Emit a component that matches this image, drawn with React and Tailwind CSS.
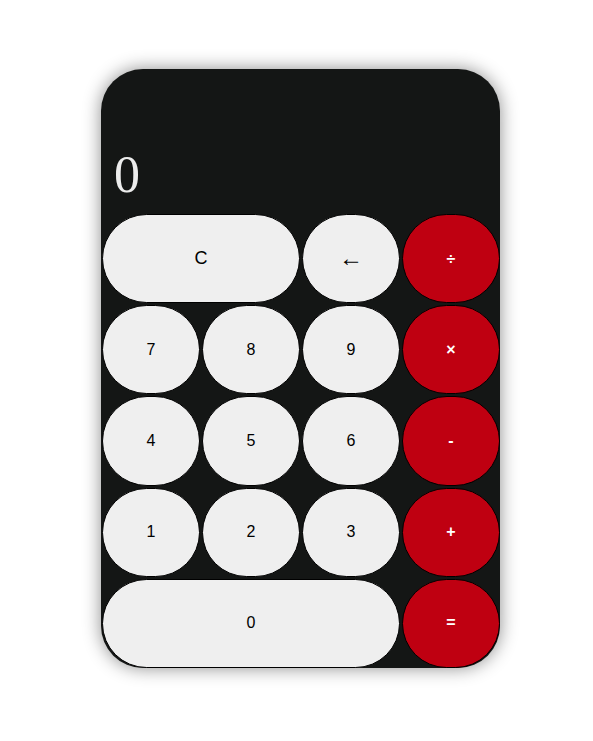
const KEYS = [
  { label: 'C', span: true },
  { label: '←', big: true },
  { label: '÷', op: true },
  { label: '7' },
  { label: '8' },
  { label: '9' },
  { label: '×', op: true },
  { label: '4' },
  { label: '5' },
  { label: '6' },
  { label: '-', op: true },
  { label: '1' },
  { label: '2' },
  { label: '3' },
  { label: '+', op: true },
  { label: '0', wide: true },
  { label: '=', op: true },
];

export default function App() {
  return (
    <div className="min-h-[741px] bg-white pt-[69px] pl-[101px]">
      <div className="w-[399px] h-[599px] rounded-[42px] overflow-hidden bg-[#141615] shadow-[0_0_18px_rgba(0,0,0,0.45)] flex flex-col">
        {/* display */}
        <div className="h-[145px] flex items-end px-[13px] pb-[13px]">
          <span className="text-[#ececec] text-[52px] leading-none" style={{ fontFamily: '"Liberation Serif", serif' }}>0</span>
        </div>

        {/* keypad */}
        <div className="flex-1 grid grid-cols-[repeat(4,98px)] grid-rows-5 gap-[2px] pl-[1px]" style={{ fontFamily: '"Liberation Sans", Arial, sans-serif' }}>
          {KEYS.map((k) => (
            <button
              key={k.label}
              className={
                'rounded-full border border-black flex items-center justify-center ' +
                (k.span ? 'col-span-2 text-[18px] ' : '') +
                (k.wide ? 'col-span-3 text-base ' : '') +
                (k.big ? 'text-[24px] pb-[2px] ' : '') +
                (k.op
                  ? 'bg-[#bf0011] text-white font-bold text-base'
                  : 'bg-[#efefef] text-black ' + (!k.span && !k.big && !k.wide ? 'text-base' : ''))
              }
            >
              {k.label}
            </button>
          ))}
        </div>
      </div>
    </div>
  );
}
